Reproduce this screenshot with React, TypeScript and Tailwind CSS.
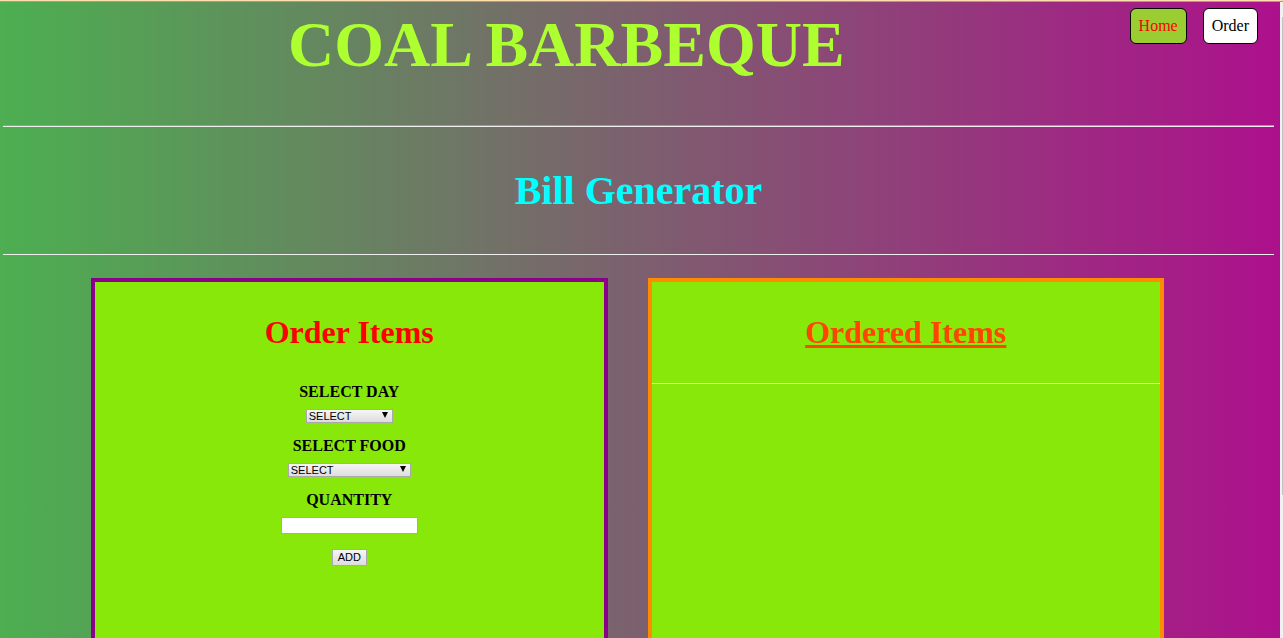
import { useState, type ReactNode } from "react";

function Field({ label, htmlFor, children }: { label: string; htmlFor: string; children: ReactNode }) {
  return (
    <div className="flex flex-col items-center gap-[7px]">
      <label htmlFor={htmlFor} className="text-base leading-5 font-bold text-black">
        {label}
      </label>
      {children}
    </div>
  );
}

function Picker({ id, width, options }: { id: string; width: string; options: string[] }) {
  return (
    <div className={`relative ${width}`}>
      <select
        id={id}
        className="block h-[14px] w-full appearance-none border border-[#a9a9a9] bg-linear-to-b from-[#f6f6f6] to-[#dddddd] pl-[2px] font-['Liberation_Sans',sans-serif] text-[11px] leading-3 text-black"
      >
        {options.map((o) => (
          <option key={o}>{o}</option>
        ))}
      </select>
      <svg viewBox="0 0 6 6" className="pointer-events-none absolute top-[3px] right-[5px] h-[6px] w-[6px]" aria-hidden="true">
        <path d="M0 0h6L3 6z" fill="#000" />
      </svg>
    </div>
  );
}

export default function App() {
  const [quantity, setQuantity] = useState("");

  return (
    <div className="flex h-screen flex-col overflow-hidden border-t border-[#ffdead] font-['Liberation_Serif',serif]">
      <div className="h-px shrink-0 bg-[#b09a78]" />
      <div className="flex min-h-0 flex-1">
        <div className="flex min-w-0 flex-1 flex-col bg-linear-to-r/srgb from-[#4caf50] to-[#ad108c]">
          <header className="mr-[6px] ml-[3px] flex h-[123px] shrink-0 items-start pt-[6px]">
            <h1 className="flex-1 text-center text-[64px] leading-[74px] font-bold text-[#adff2f]">COAL BARBEQUE</h1>
            <nav className="mr-4 flex gap-4">
              <a href="#home" className="rounded-md border border-black bg-[#9acd32] px-2 py-[5px] text-base text-[#ff0000]">
                Home
              </a>
              <a href="#order" className="rounded-md border border-black bg-white px-2 py-[5px] text-base text-black">
                Order
              </a>
            </nav>
          </header>
          <hr className="mr-[6px] ml-[3px] h-[2px] shrink-0 border-t border-b border-t-[#9a9a9a] border-b-[#eeeeee]" />
          <h2 className="mr-[6px] ml-[3px] shrink-0 py-[40px] text-center text-[40px] leading-[47px] font-bold text-[#00ffff]">Bill Generator</h2>
          <hr className="mr-[6px] ml-[3px] shrink-0 border-t border-[#eeeeee]" />
          <main className="mt-[23px] mr-[116px] ml-[91px] flex min-h-0 flex-1 gap-10">
            <section className="flex min-w-0 flex-1 flex-col items-center border-4 border-b-0 border-[#8b008b] bg-[#88e80a]">
              <h3 className="mt-8 text-[32px] leading-9 font-bold text-[#ff0000]">Order Items</h3>
              <form className="mt-8 flex flex-col items-center gap-[13px]" onSubmit={(e) => e.preventDefault()}>
                <Field label="SELECT DAY" htmlFor="day">
                  <Picker id="day" width="w-[87px]" options={["SELECT"]} />
                </Field>
                <Field label="SELECT FOOD" htmlFor="food">
                  <Picker id="food" width="w-[123px]" options={["SELECT"]} />
                </Field>
                <Field label="QUANTITY" htmlFor="quantity">
                  <input
                    id="quantity"
                    type="text"
                    value={quantity}
                    onChange={(e) => setQuantity(e.target.value)}
                    className="h-[17px] w-[137px] border border-[#a9a9a9] bg-white px-1 font-['Liberation_Sans',sans-serif] text-[11px] text-black"
                  />
                </Field>
                <button
                  type="submit"
                  className="mt-[2px] h-[17px] rounded-[1px] border border-[#a9a9a9] bg-linear-to-b from-[#f6f6f6] to-[#dddddd] px-[5px] font-['Liberation_Sans',sans-serif] text-[11px] leading-[15px] text-black"
                >
                  ADD
                </button>
              </form>
            </section>
            <section className="min-w-0 flex-1 border-4 border-b-0 border-[#ff8c00] bg-[#88e80a]">
              <h3 className="mt-8 text-center text-[32px] leading-9 font-bold text-[#ff4500] underline">Ordered Items</h3>
              <hr className="mt-[33px] border-t border-[#dff5b8]" />
            </section>
          </main>
        </div>
        <div className="flex w-[3px] shrink-0 justify-end bg-[#f1f1f1] pt-[15px]" aria-hidden="true">
          <div className="h-[77%] w-px bg-[#c1c1c1]" />
        </div>
      </div>
    </div>
  );
}
